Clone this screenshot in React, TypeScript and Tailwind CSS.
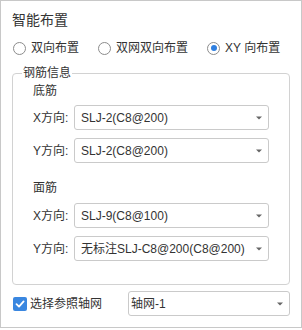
import React from "react";

const font = { fontFamily: '"Liberation Sans", "Noto Sans CJK SC", sans-serif' };

function Radio({ label, checked }: { label: string; checked?: boolean }) {
  return (
    <label className="flex items-center gap-[5px]">
      <span className="flex h-[13px] w-[13px] items-center justify-center rounded-full border border-[#8c8c8c] bg-white">
        {checked && <span className="h-[6px] w-[6px] rounded-full bg-[#2f7fe0]" />}
      </span>
      <span className="text-[12px] leading-[20px] text-[#333]">{label}</span>
    </label>
  );
}

function Arrow() {
  return (
    <svg width="6" height="4" viewBox="0 0 6 4" className="shrink-0">
      <path d="M0 0.5 H6 L3 3.5 Z" fill="#666" />
    </svg>
  );
}

function Select({ value, className = "" }: { value: string; className?: string }) {
  return (
    <div
      className={
        "flex h-[25px] items-center justify-between rounded-[3px] border border-[#cacaca] bg-white " +
        className
      }
    >
      <span className="truncate text-[12px] leading-[16px] text-[#333]">{value}</span>
      <Arrow />
    </div>
  );
}

function Row({ label, value }: { label: string; value: string }) {
  return (
    <div className="flex items-center">
      <span className="w-[41px] shrink-0 text-[12px] leading-[16px] text-[#333]">{label}</span>
      <Select value={value} className="w-[195px] pl-[6px] pr-[6px]" />
    </div>
  );
}

export default function App() {
  return (
    <div
      style={font}
      className="w-[302px] border border-[#c8c8c8] bg-white px-[11px] pt-[9px] pb-[11px]"
    >
      <div className="text-[14px] leading-[20px] text-[#333]">智能布置</div>

      <div className="mt-[8px] flex items-center gap-[19px] pl-[1px]">
        <Radio label="双向布置" />
        <Radio label="双网双向布置" />
        <Radio label="XY 向布置" checked />
      </div>

      <fieldset className="mt-[7px] rounded-[4px] border border-[#d2d2d2]">
        <legend className="ml-[9px] px-[1px] text-[12px] leading-[16px] text-[#333]">钢筋信息</legend>
        <div className="px-[20px] pt-[2px] pb-[23px]">
          <div className="text-[12px] leading-[16px] text-[#333]">底筋</div>
          <div className="mt-[6px] flex flex-col gap-[8px]">
            <Row label="X方向:" value="SLJ-2(C8@200)" />
            <Row label="Y方向:" value="SLJ-2(C8@200)" />
          </div>
          <div className="mt-[17px] text-[12px] leading-[16px] text-[#333]">面筋</div>
          <div className="mt-[7px] flex flex-col gap-[8px]">
            <Row label="X方向:" value="SLJ-9(C8@100)" />
            <Row label="Y方向:" value="无标注SLJ-C8@200(C8@200)" />
          </div>
        </div>
      </fieldset>

      <div className="mt-[6px] flex items-center justify-between">
        <label className="flex items-center gap-[3px] pl-[1px]">
          <span className="flex h-[14px] w-[14px] items-center justify-center rounded-[2px] bg-[#3a87e0]">
            <svg width="10" height="10" viewBox="0 0 10 10">
              <path d="M1.5 5.2 L4 7.6 L8.6 2.4" fill="none" stroke="#fff" strokeWidth="1.8" strokeLinecap="round" strokeLinejoin="round" />
            </svg>
          </span>
          <span className="text-[12px] leading-[16px] text-[#333]">选择参照轴网</span>
        </label>
        <Select value="轴网-1" className="w-[162px] pl-[2px] pr-[6px]" />
      </div>
    </div>
  );
}
